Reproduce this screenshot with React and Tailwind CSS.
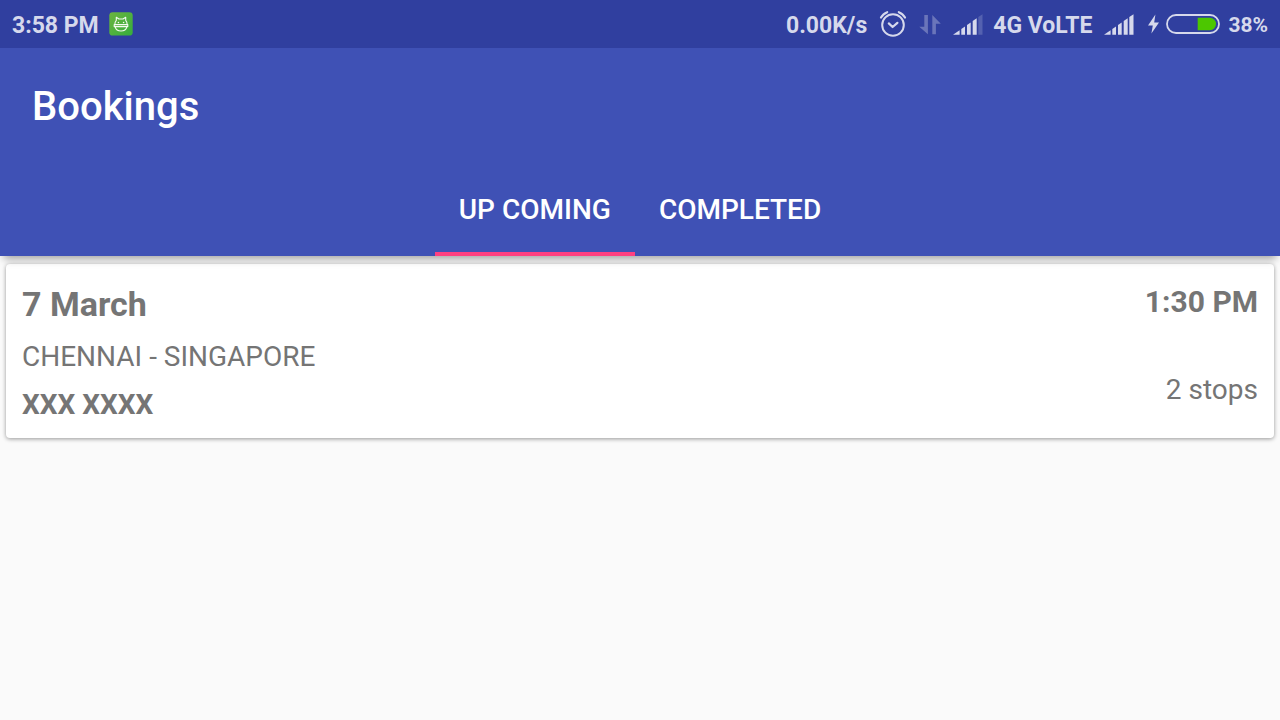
import { useState } from "react";

function AppBadge() {
  return (
    <svg className="size-6" viewBox="0 0 24 24" fill="none" aria-hidden="true">
      <defs>
        <linearGradient id="badge" x1="0" y1="0" x2="1" y2="1">
          <stop offset="0" stopColor="#6cb440" />
          <stop offset="1" stopColor="#35ad3c" />
        </linearGradient>
      </defs>
      <rect x="0.3" y="0.2" width="23.4" height="23.4" rx="3.4" fill="url(#badge)" />
      <g stroke="#f4faf0" strokeWidth="1.1" strokeLinejoin="round" strokeLinecap="round">
        <path d="M5.8 12.8C5.8 10.6 6.4 9.2 7.3 8.3V5.3L10 7H14L16.7 5.3V8.3C17.6 9.2 18.2 10.6 18.2 12.8" />
        <path d="M5.2 12.6H18.8V14.6H5.2Z" />
        <path d="M6.2 14.8C6.8 17.4 9 19 12 19S17.2 17.4 17.8 14.8" />
      </g>
      <circle cx="9.4" cy="10.5" r="0.8" fill="#f4faf0" />
      <circle cx="14.6" cy="10.5" r="0.8" fill="#f4faf0" />
    </svg>
  );
}

function AlarmIcon() {
  return (
    <svg className="h-7 w-7" viewBox="0 0 28 28" fill="none" stroke="currentColor" strokeLinecap="round" aria-label="Alarm set" role="img">
      <circle cx="14" cy="15" r="10.8" strokeWidth="2" />
      <path d="M9.8 13.4L13.6 17L18.4 12.8" strokeWidth="2.2" strokeLinejoin="round" />
      <path d="M2 7.6C3.4 5 5.4 3.2 8.2 2.2" strokeWidth="2.2" />
      <path d="M26 7.6C24.6 5 22.6 3.2 19.8 2.2" strokeWidth="2.2" />
    </svg>
  );
}

function DataIcon() {
  return (
    <svg className="h-6 w-[22px] opacity-35" viewBox="0 0 22 24" fill="currentColor" aria-label="Mobile data" role="img">
      <path d="M5.3 3H8.9V22.3L0.3 14.7H5.3Z" />
      <path d="M13.3 3L21.8 11.7H16.9V22.3H13.3Z" />
    </svg>
  );
}

function SignalIcon({ weak = false }) {
  return (
    <svg className="h-6 w-[30px]" viewBox="0 0 30 24" fill="currentColor" aria-label="Signal strength" role="img">
      <path d="M0 22.7L6.6 18.2V22.7Z" />
      <path d="M8.3 17L12 14.5V22.7H8.3Z" />
      <path d="M14 13.1L17.7 10.5V22.7H14Z" />
      <path d="M19.7 9.1L23.7 6.3V22.7H19.7Z" />
      <path d="M25.3 5L29.5 2.2V22.7H25.3Z" opacity={weak ? 0.22 : 1} />
    </svg>
  );
}

function BatteryIcon() {
  return (
    <svg className="h-6 w-[72px]" viewBox="0 0 72 24" fill="none" aria-label="Battery charging" role="img">
      <path d="M7.4 2.6L0 13.4H4.8L3.4 21.6L11 10.6H6.2Z" fill="currentColor" />
      <rect x="19" y="3" width="52" height="18" rx="9" stroke="currentColor" strokeWidth="1.8" />
      <path d="M49.7 5.8H61.8A6.2 6.2 0 0 1 61.8 18.2H49.7Z" fill="#4cc700" />
    </svg>
  );
}

function StatusBar() {
  return (
    <div className="flex h-12 items-center justify-between bg-[#303f9f] px-3 text-[23px] font-bold text-[#d6d9ec]">
      <div className="flex items-center gap-2.5">
        <span className="pt-1">3:58 PM</span>
        <AppBadge />
      </div>
      <div className="flex items-center gap-3">
        <span className="pt-1">0.00K/s</span>
        <AlarmIcon />
        <DataIcon />
        <div className="flex items-center gap-2.5">
          <SignalIcon weak />
          <span className="pt-1">4G VoLTE</span>
        </div>
        <div className="flex items-center gap-3.5">
          <SignalIcon />
          <div className="flex items-center gap-2">
            <BatteryIcon />
            <span className="pt-1 text-[21px]">38%</span>
          </div>
        </div>
      </div>
    </div>
  );
}

const tabs = ["Up coming", "Completed"];

const bookings = [
  { date: "7 March", time: "1:30 PM", route: "CHENNAI - SINGAPORE", passenger: "XXX XXXX", stops: "2 stops", tab: "Up coming" },
];

function BookingCard({ booking }) {
  return (
    <article className="flex justify-between rounded bg-white px-4 pt-5 pb-[9px] text-[28px] leading-[48px] text-[#757575] shadow-[0_1px_4px_rgba(0,0,0,0.4)]">
      <div>
        <h2 className="mb-[9px] text-[34px] leading-10 font-bold">{booking.date}</h2>
        <p>{booking.route}</p>
        <p className="font-bold">{booking.passenger}</p>
      </div>
      <div className="text-right">
        <p className="mb-[46px] text-[30px] leading-9 font-bold">{booking.time}</p>
        <p>{booking.stops}</p>
      </div>
    </article>
  );
}

export default function App() {
  const [active, setActive] = useState(tabs[0]);
  return (
    <div className="min-h-screen bg-[#fafafa] font-['Roboto',sans-serif]">
      <StatusBar />
      <header className="relative z-10 bg-[#3f51b5] text-white shadow-[0_7px_8px_-4px_rgba(0,0,0,0.35)]">
        <div className="flex h-28 items-center px-8 pt-1.5">
          <h1 className="text-[40px] leading-[48px] font-medium">Bookings</h1>
        </div>
        <div role="tablist" className="flex h-24 justify-center">
          {tabs.map((tab) => (
            <button
              key={tab}
              type="button"
              role="tab"
              aria-selected={tab === active}
              onClick={() => setActive(tab)}
              className={
                tab === active
                  ? "border-y-4 border-t-transparent border-b-[#ff4081] px-6 pt-1 text-[28px] font-medium uppercase"
                  : "border-y-4 border-transparent px-6 pt-1 text-[28px] font-medium uppercase"
              }
            >
              {tab}
            </button>
          ))}
        </div>
      </header>
      <main className="flex flex-col gap-4 px-1.5 pt-2">
        {bookings
          .filter((booking) => booking.tab === active)
          .map((booking) => (
            <BookingCard key={booking.date} booking={booking} />
          ))}
      </main>
    </div>
  );
}
